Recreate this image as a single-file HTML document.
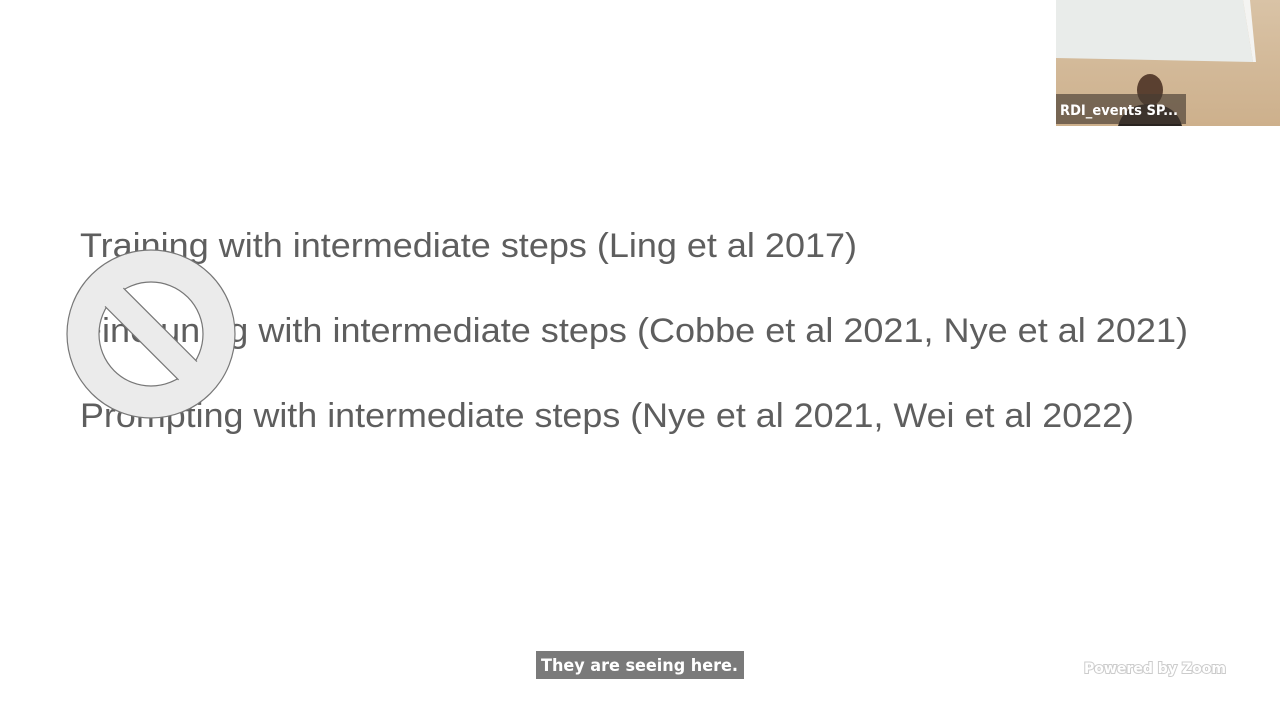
<!DOCTYPE html>
<html><head><meta charset="utf-8"><style>
html,body{margin:0;padding:0;width:1280px;height:720px;overflow:hidden;background:#fff;font-family:"Liberation Sans",sans-serif}
</style></head><body>
<svg width="1280" height="720" style="position:absolute;left:0;top:0">
<defs>
<linearGradient id="wall" x1="0" y1="0" x2="0" y2="1">
<stop offset="0" stop-color="#d9c3a6"/><stop offset="1" stop-color="#cdb08c"/></linearGradient>
</defs>
<g fill="#5e5e5e" font-family="Liberation Sans, sans-serif" font-size="34">
<text x="80" y="257" textLength="777" lengthAdjust="spacingAndGlyphs">Training with intermediate steps (Ling et al 2017)</text>
<text x="80" y="342" textLength="1108" lengthAdjust="spacingAndGlyphs">Finetuning with intermediate steps (Cobbe et al 2021, Nye et al  2021)</text>
<text x="80" y="427" textLength="1054" lengthAdjust="spacingAndGlyphs">Prompting with intermediate steps (Nye et al 2021, Wei et al 2022)</text>
</g>
<g transform="translate(151,334)">
<path fill="#ebebeb" fill-rule="evenodd" stroke="#777" stroke-width="1.2" d="M-84,0 A84,84 0 1,0 84,0 A84,84 0 1,0 -84,0 Z M-52,0 A52,52 0 1,1 52,0 A52,52 0 1,1 -52,0 Z"/>
<g transform="rotate(45)">
<rect x="-53" y="-13" width="106" height="26" fill="#ebebeb"/>
<line x1="-52" y1="-13" x2="52" y2="-13" stroke="#777" stroke-width="1.2"/>
<line x1="-52" y1="13" x2="52" y2="13" stroke="#777" stroke-width="1.2"/>
</g>
</g>
<rect x="1056" y="0" width="224" height="126" fill="url(#wall)"/>
<polygon points="1056,0 1243,0 1253,62 1056,58" fill="#e9ecea"/>
<polygon points="1243,0 1250,0 1256,62 1253,62" fill="#f4f4f2"/>
<ellipse cx="1150" cy="90" rx="13" ry="16" fill="#5a4030"/>
<path d="M1118,126 Q1124,104 1150,104 Q1176,104 1182,126 Z" fill="#2a2420"/>
<rect x="1056" y="94" width="130" height="30" fill="rgba(70,60,50,0.65)"/>
<text x="1060" y="115" fill="#fff" font-family="DejaVu Sans, sans-serif" font-weight="bold" font-size="14" textLength="118" lengthAdjust="spacingAndGlyphs">RDI_events SP...</text>
<rect x="536" y="651" width="208" height="28" fill="#7a7a7a"/>
<text x="541" y="671" fill="#fff" font-family="DejaVu Sans, sans-serif" font-weight="bold" font-size="17" textLength="197" lengthAdjust="spacingAndGlyphs">They are seeing here.</text>
<text x="1084" y="673" fill="#fff" stroke="#ccc" stroke-width="2" paint-order="stroke" font-family="DejaVu Sans, sans-serif" font-weight="bold" font-size="14" textLength="142" lengthAdjust="spacingAndGlyphs">Powered by Zoom</text>
</svg>
</body></html>
